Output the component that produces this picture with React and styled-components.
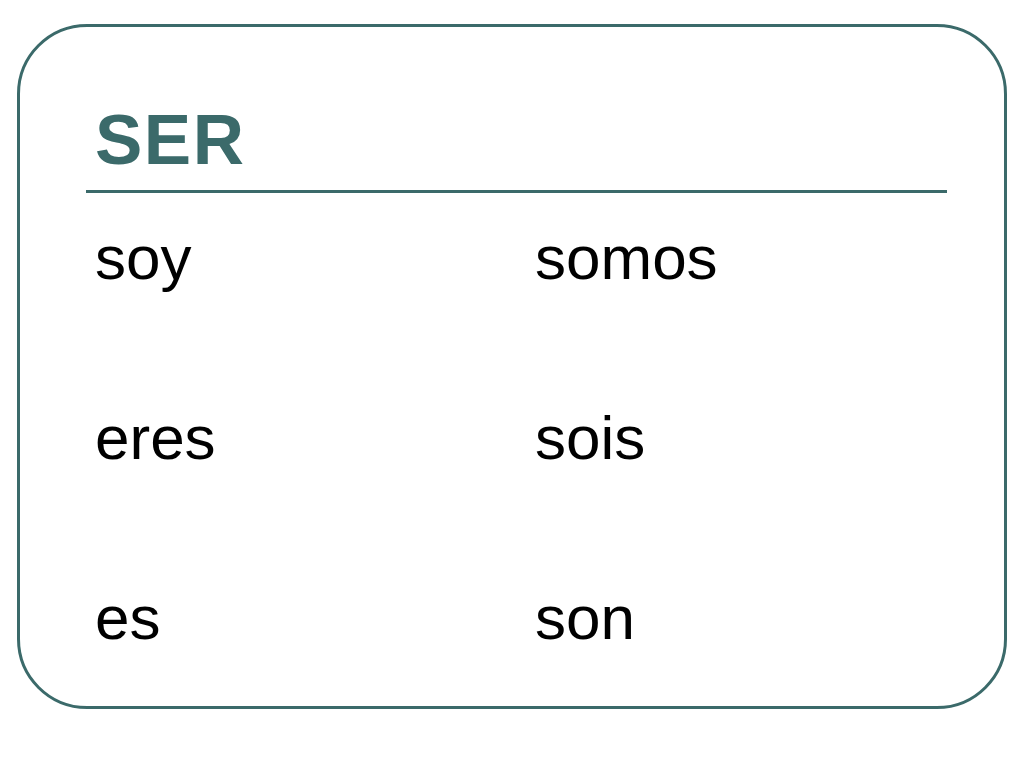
import styled, { createGlobalStyle } from "styled-components";

const GlobalStyle = createGlobalStyle`
  html, body {
    margin: 0;
    padding: 0;
    background: #ffffff;
  }
  body {
    font-family: "Liberation Sans", Arial, sans-serif;
  }
`;

const rows = [
  ["soy", "somos"],
  ["eres", "sois"],
  ["es", "son"],
];

export default function App() {
  return (
    <>
      <GlobalStyle />
      <Page>
        <Slide>
          <Title>SER</Title>
          <Rule />
          <Table>
            {rows.map(([sing, plur]) => (
              <Row key={sing}>
                <Word>{sing}</Word>
                <Word>{plur}</Word>
              </Row>
            ))}
          </Table>
        </Slide>
      </Page>
    </>
  );
}

const Page = styled.div`
  width: 1024px;
  height: 768px;
  padding: 24px 0 0 17px;
  box-sizing: border-box;
`;

const Slide = styled.div`
  width: 990px;
  height: 685px;
  box-sizing: border-box;
  border: 3px solid #3b6a6a;
  border-radius: 70px;
  padding: 77px 57px 0 66px;
  display: flex;
  flex-direction: column;
`;

const Title = styled.h1`
  margin: 0;
  padding-left: 9px;
  font-family: "Liberation Sans", Arial, sans-serif;
  font-weight: 700;
  font-size: 71px;
  letter-spacing: 1.5px;
  line-height: 1;
  color: #3b6a6a;
`;

const Rule = styled.div`
  margin-top: 15px;
  height: 3px;
  background: #3b6a6a;
`;

const Table = styled.div`
  margin-top: 34px;
  display: flex;
  flex-direction: column;
  gap: 118px;
  padding-left: 9px;
`;

const Row = styled.div`
  display: grid;
  grid-template-columns: 440px 1fr;
`;

const Word = styled.div`
  font-size: 62px;
  line-height: 1;
  color: #000000;
`;
